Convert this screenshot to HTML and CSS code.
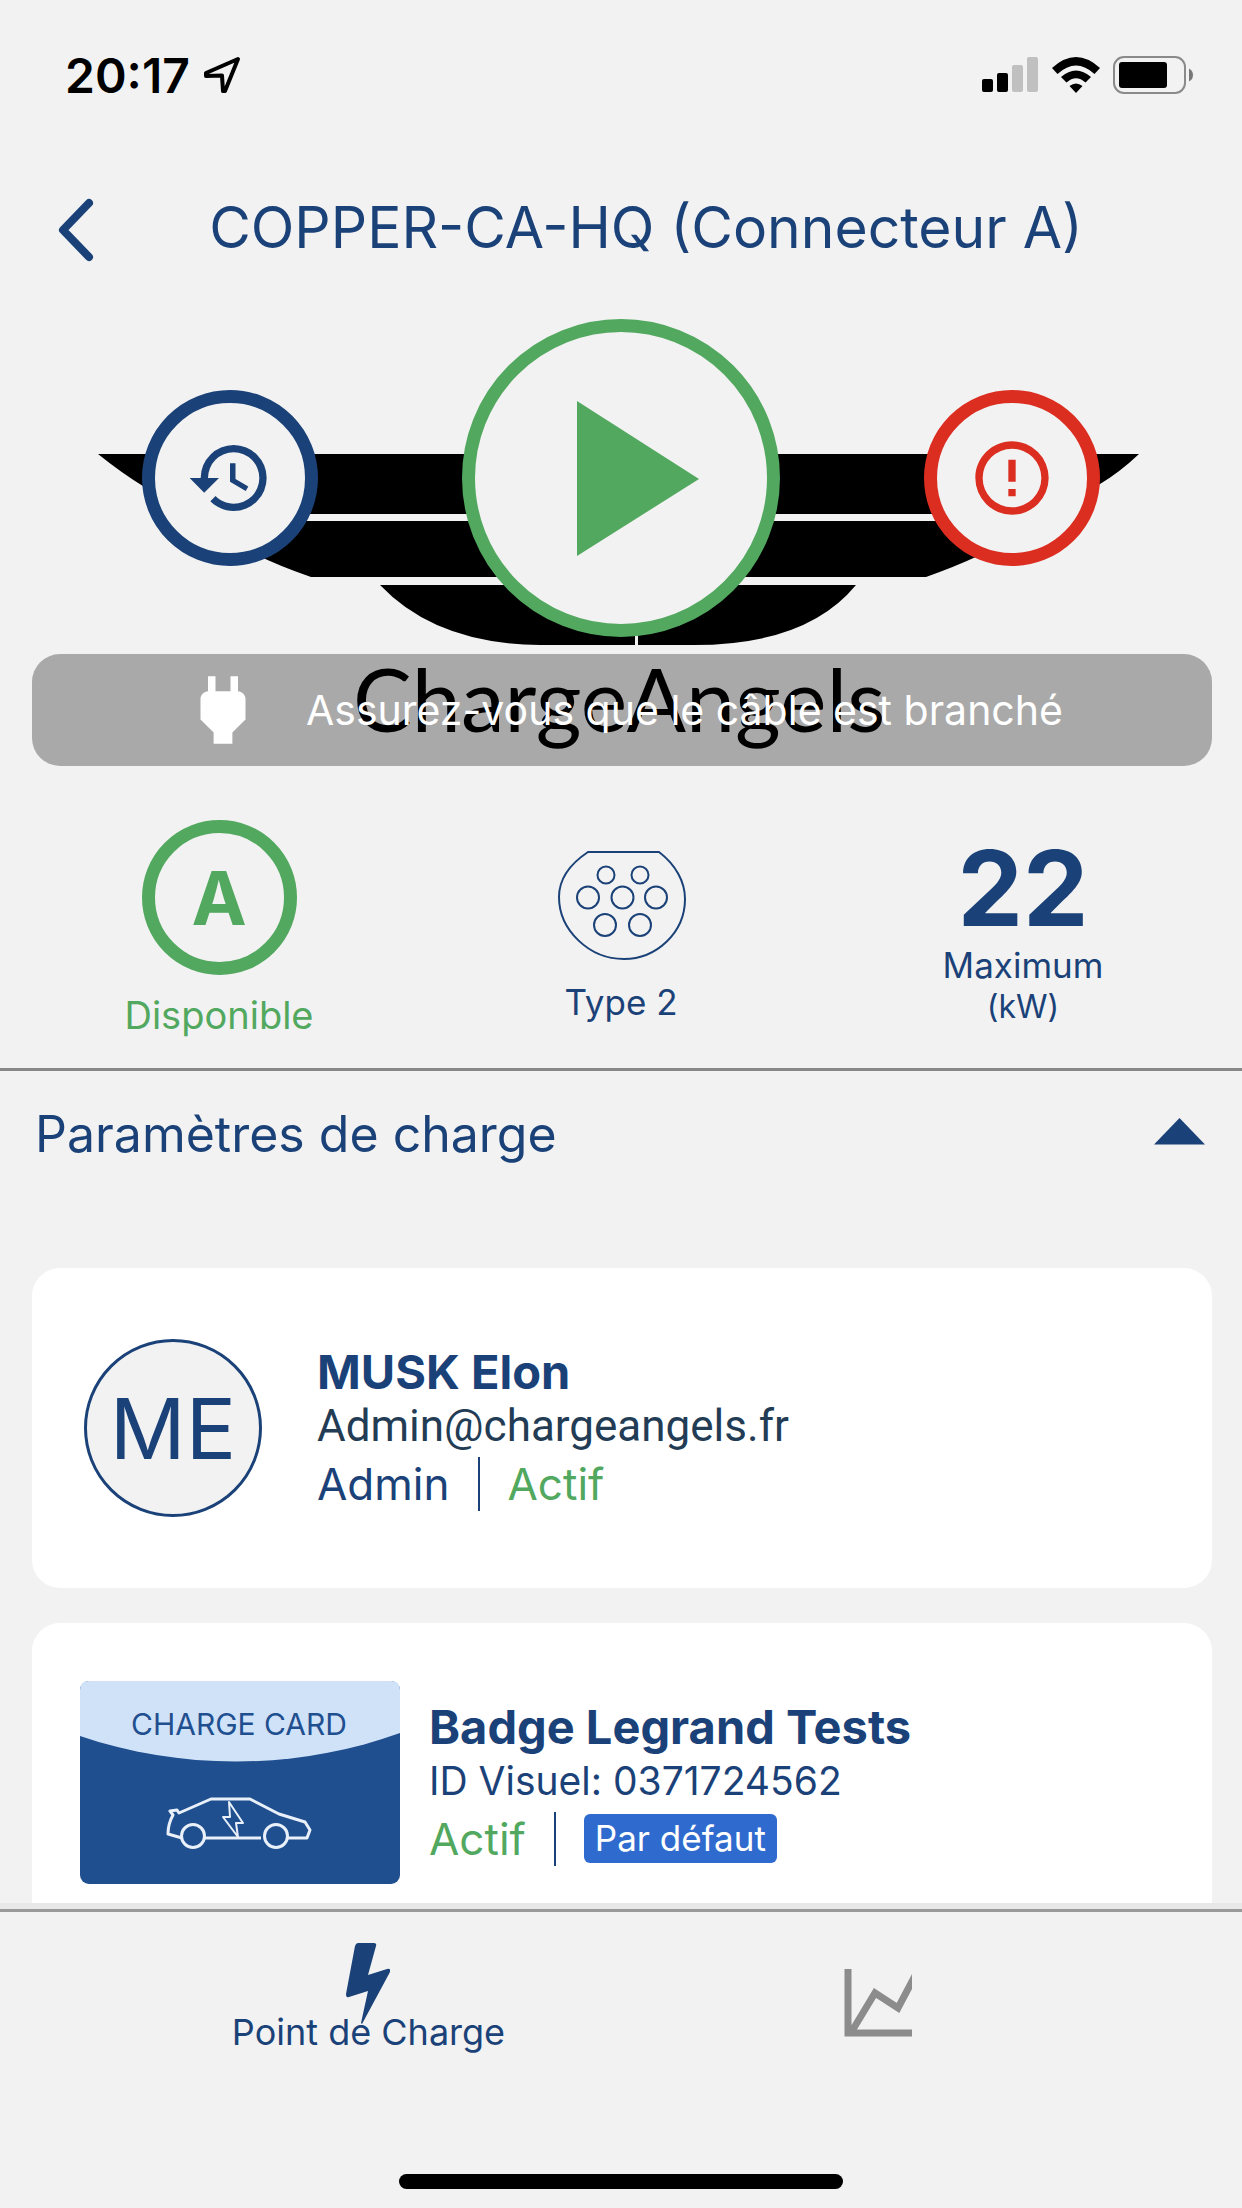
FILE: index.html
```html
<!DOCTYPE html>
<html lang="fr">
<head>
<meta charset="utf-8">
<meta name="viewport" content="width=device-width, initial-scale=1">
<title>COPPER-CA-HQ (Connecteur A)</title>
<link rel="stylesheet" href="styles.css">
</head>
<body>
<div class="status">
  <div class="status-left">
    <span class="time">20:17</span>
    <svg width="38" height="38" viewBox="0 0 38 38" fill="none" stroke="#000" stroke-width="4" stroke-linejoin="round"><path d="M35 3 3 17V20L19 19.500 20 35H22Z"/></svg>
  </div>
  <div class="status-right">
    <svg width="57" height="36" viewBox="0 0 57 36"><rect y="22" width="11" height="13" rx="2"/><rect x="15" y="16" width="11" height="19" rx="2"/><rect x="30" y="8" width="11" height="27" rx="2" fill="#c0c0c0"/><rect x="45" y="0" width="11" height="35" rx="2" fill="#c0c0c0"/></svg>
    <svg width="48" height="36" viewBox="0 0 48 36"><path d="M0 11Q24-11 48 11L42.500 17Q24 0 5.500 17ZM9 20Q24 7 39 20L33.500 25.500Q24 17 14.500 25.500ZM17.500 29Q24 24 30.500 29L24 36Z"/></svg>
    <svg width="82" height="38" viewBox="0 0 82 38"><rect x="1" y="1" width="71" height="36" rx="10" fill="none" stroke="#8a8a8a" stroke-width="2"/><rect x="6" y="6" width="48" height="26" rx="3"/><path d="M76 12.500q4 2 4 6.500t-4 6.500z" fill="#777"/></svg>
  </div>
</div>

<header class="header">
  <button class="back" aria-label="Retour"><svg width="36" height="64" viewBox="0 0 36 64" fill="none" stroke="#1b4278" stroke-width="8" stroke-linecap="round" stroke-linejoin="round"><path d="M31 5 5 32 31 59"/></svg></button>
  <h1>COPPER-CA-HQ (Connecteur A)</h1>
</header>

<section class="hero">
  <svg class="logo" viewBox="0 306 1242 460">
    <path d="M98 454H1139Q1120 472 1100 484C1080 498 1060 509 1040 514H200Q150 496 98 454Z"/>
    <path d="M205 521H1035Q1000 551 926 577H311Q240 553 205 521Z"/>
    <path d="M380 585H856Q806 646 690 645H540Q436 644 380 585Z"/>
    <path d="M636.500 585V646" stroke="#f2f2f2" stroke-width="3"/>
    <text class="logo-name" x="353" y="732">ChargeAngels</text>
  </svg>
  <div class="actions">
    <button class="round blue" aria-label="Historique"><svg width="88" height="88" viewBox="0 0 24 24"><path fill="currentColor" d="M13.500 8H12V13L16.280 15.540L17 14.330L13.500 12.250V8M13 3A9 9 0 0 0 4 12H1L4.960 16.030L9 12H6A7 7 0 0 1 13 5A7 7 0 0 1 20 12A7 7 0 0 1 13 19C11.070 19 9.320 18.210 8.060 16.940L6.640 18.360C8.270 20 10.500 21 13 21A9 9 0 0 0 22 12A9 9 0 0 0 13 3"/></svg></button>
    <button class="round play" aria-label="Démarrer"><svg width="206" height="206" viewBox="0 0 206 206"><path fill="currentColor" d="M59 26V181L181 104Z"/></svg></button>
    <button class="round red" aria-label="Signaler une erreur"><svg width="88" height="88" viewBox="0 0 24 24"><path fill="currentColor" d="M11 15H13V17H11V15M11 7H13V13H11V7M12 2C6.470 2 2 6.500 2 12A10 10 0 0 0 12 22A10 10 0 0 0 22 12A10 10 0 0 0 12 2M12 20A8 8 0 0 1 4 12A8 8 0 0 1 12 4A8 8 0 0 1 20 12A8 8 0 0 1 12 20Z"/></svg></button>
  </div>
  <div class="banner">
    <svg width="90" height="90" viewBox="0 0 24 24"><path fill="#fff" d="M16 7V3H14V7H10V3H8V7C7 7 6 8 6 9V14.500L9.500 18V21H14.500V18L18 14.500V9C18 8 17 7 16 7Z"/></svg>
    <p>Assurez-vous que le câble est branché</p>
  </div>
</section>

<section class="stats">
  <div class="stat">
    <span class="connector">A</span>
    <span class="state">Disponible</span>
  </div>
  <div class="stat lowered">
    <svg width="130" height="111" viewBox="-2 0 130 111" fill="none" stroke="#1b4278" stroke-width="2"><path d="M30 2H101C118 15 127 32 127 49C127 83 98 109 66 109C31 109 1 80 1 47C1 29 12 14 30 2Z"/><circle cx="48" cy="25" r="8.500"/><circle cx="82" cy="25" r="8.500"/><circle cx="30" cy="47.500" r="11"/><circle cx="64.500" cy="47.500" r="11"/><circle cx="98" cy="47.500" r="11"/><circle cx="47" cy="75" r="11"/><circle cx="82" cy="75" r="11"/></svg>
    <span class="label">Type 2</span>
  </div>
  <div class="stat lowered">
    <span class="power">22</span>
    <span class="label">Maximum</span>
    <span class="unit">(kW)</span>
  </div>
</section>

<main class="settings">
  <button class="section-head" aria-expanded="true">
    <span>Paramètres de charge</span>
    <svg width="51" height="27" viewBox="0 0 51 27"><path fill="#1b4278" d="M0 26.500 25.500 0 51 26.500Z"/></svg>
  </button>
  <article class="card user">
    <span class="avatar">ME</span>
    <div class="info">
      <h2>MUSK Elon</h2>
      <p class="email">Admin@chargeangels.fr</p>
      <p class="tags"><span>Admin</span><span class="active">Actif</span></p>
    </div>
  </article>
  <article class="card badge-card">
    <svg class="thumb" width="320" height="203" viewBox="0 0 320 203">
      <rect width="320" height="203" rx="9" fill="#1f4f8f"/>
      <path fill="#d0e2f8" d="M0 55V9Q0 0 9 0H311Q320 0 320 9V52C215 90 100 89 0 55Z"/>
      <text class="thumb-text" x="159" y="54" text-anchor="middle">CHARGE CARD</text>
      <g fill="none" stroke="#e9f0fa" stroke-width="3" stroke-linejoin="round"><path d="M102 157 88 153Q88 143 93 134L90 130 97 129 99 132 131 118H170L199 133 225 141 230 149 227 157H207M181 157H125"/><circle cx="113" cy="155" r="11.500"/><circle cx="196" cy="155" r="11.500"/><path stroke-width="2" d="M149 121 163 142 156 142 158 156 143 136H150Z"/></g>
    </svg>
    <div class="info">
      <h2>Badge Legrand Tests</h2>
      <p class="visual-id">ID Visuel: 0371724562</p>
      <p class="tags"><span class="active">Actif</span><span class="default"><b>Par défaut</b></span></p>
    </div>
  </article>
</main>

<footer class="footer">
  <nav class="tabs">
    <a class="tab current" href="#point">
      <svg width="44" height="82" viewBox="0 0 44 82"><path fill="#1b4278" d="M12 0H28Q31 0 30 3L22 32 41 26Q45 25 44 29L16 81 15 80 22 48 3 54Q0 55 0 51L9 3Q10 0 12 0Z"/></svg>
      <span>Point de Charge</span>
    </a>
    <a class="tab" href="#graphique" aria-label="Graphique">
      <svg class="chart" width="68" height="68" viewBox="0 0 68 68" fill="none" stroke="#8c8c8c" stroke-width="7"><path d="M4 0V64H68M8 62 31 24 54 39 72 5"/></svg>
    </a>
  </nav>
  <div class="home-bar"></div>
</footer>
</body>
</html>
```
FILE: styles.css
```css
* { box-sizing: border-box; }
body {
  margin: 0;
  height: 100vh;
  display: flex;
  flex-direction: column;
  background: #f2f2f2;
  color: #1b4278;
  font-family: Inter, "Liberation Sans", sans-serif;
}
h1, h2, p { margin: 0; }
button { border: 0; padding: 0; background: none; color: inherit; font: inherit; }
svg { display: block; flex: none; }

.status {
  flex: none;
  height: 150px;
  padding: 0 47px 0 65px;
  display: flex;
  align-items: center;
  justify-content: space-between;
  color: #000;
}
.status-left, .status-right { display: flex; align-items: center; gap: 13px; }
.time { font-size: 48px; font-weight: 600; }

.header {
  flex: none;
  height: 156px;
  padding: 0 58px;
  display: grid;
  grid-template-columns: 60px 1fr 10px;
  align-items: center;
}
.back { padding-top: 4px; }
.header h1 { text-align: center; font-size: 57px; font-weight: 400; line-height: 70px; white-space: nowrap; }

.hero { flex: none; position: relative; padding: 13px 30px 0 32px; }
.logo { position: absolute; left: 0; top: 0; width: 100%; }
.logo-name { font-family: Lato, sans-serif; font-size: 88px; }
.actions {
  position: relative;
  padding: 0 5px 0 3px;
  display: grid;
  grid-template-columns: repeat(3, 1fr);
  align-items: center;
  justify-items: center;
}
.round {
  width: 176px;
  height: 176px;
  border: 13px solid currentColor;
  border-radius: 50%;
  background: #f2f2f2;
  display: flex;
  align-items: center;
  justify-content: center;
}
.round.play { width: 318px; height: 318px; }
.blue { color: #1b4278; }
.play { color: #51a85e; }
.red { color: #db2e20; }
.banner {
  position: relative;
  margin-top: 17px;
  height: 112px;
  padding-left: 146px;
  display: flex;
  align-items: center;
  gap: 38px;
  border-radius: 28px;
  background: rgba(0, 0, 0, .3);
  color: #fff;
  font-size: 41px;
}

.stats {
  flex: none;
  height: 305px;
  padding: 54px 18px 0;
  display: grid;
  grid-template-columns: repeat(3, 1fr);
  border-bottom: 3px solid #888;
}
.stat { display: flex; flex-direction: column; align-items: center; }
.lowered { padding-top: 30px; }
.connector {
  width: 155px;
  height: 155px;
  margin-bottom: 18px;
  border: 13px solid currentColor;
  border-radius: 50%;
  display: flex;
  align-items: center;
  justify-content: center;
  font-size: 74px;
  font-weight: 700;
  color: #51a85e;
}
.state { font-size: 38px; line-height: 44px; color: #51a85e; }
.label { font-size: 35px; line-height: 42px; }
.unit { font-size: 32px; line-height: 42px; }
.stat svg { margin-bottom: 20px; }
.power { font-size: 104px; font-weight: 700; line-height: 76px; margin-bottom: 18px; }

.settings { flex: 1; min-height: 0; overflow: hidden; padding: 0 30px 0 32px; border-bottom: 6px solid #e8e8e8; }
.section-head {
  width: 100%;
  height: 125px;
  margin-bottom: 72px;
  padding: 0 7px 0 3px;
  display: flex;
  align-items: center;
  justify-content: space-between;
  font-size: 50px;
}
.section-head svg { margin-bottom: 4px; }
.card { display: flex; align-items: center; background: #fff; border-radius: 28px; }
.user { height: 320px; padding: 0 52px; gap: 55px; }
.badge-card { margin-top: 35px; padding: 58px 48px; gap: 29px; }
.avatar {
  width: 178px;
  height: 178px;
  border: 3px solid #1b4278;
  border-radius: 50%;
  background: #f2f2f2;
  display: flex;
  align-items: center;
  justify-content: center;
  font-size: 84px;
}
.info h2 { font-size: 47px; line-height: 54px; font-weight: 700; }
.email { font-family: Roboto, sans-serif; font-size: 44px; line-height: 54px; color: #233c55; }
.visual-id { font-size: 39px; line-height: 54px; }
.tags { display: flex; align-items: center; margin-top: 4px; font-size: 44px; line-height: 54px; }
.tags span + span { margin-left: 28px; padding-left: 28px; border-left: 2px solid #1b4278; }
.active { color: #51a85e; }
.default { display: flex; align-items: center; height: 54px; }
.default b { padding: 0 11px; border-radius: 6px; background: #2f6bce; color: #fff; font-size: 35px; line-height: 49px; font-weight: 400; }
.thumb-text { font-family: Inter, sans-serif; font-size: 30px; fill: #1f4f8f; }

.footer { flex: none; height: 299px; border-top: 3px solid #999; display: flex; flex-direction: column; justify-content: space-between; align-items: center; padding-bottom: 19px; }
.tabs { width: 100%; padding: 31px 110px 0 114px; display: grid; grid-template-columns: 1fr 1fr; justify-items: center; }
.tab { display: flex; flex-direction: column; align-items: center; color: inherit; text-decoration: none; font-size: 36px; }
.tab span { margin-top: -14px; line-height: 42px; }
.chart { margin-top: 26px; }
.home-bar { width: 444px; height: 15px; border-radius: 8px; background: #000; }
```
